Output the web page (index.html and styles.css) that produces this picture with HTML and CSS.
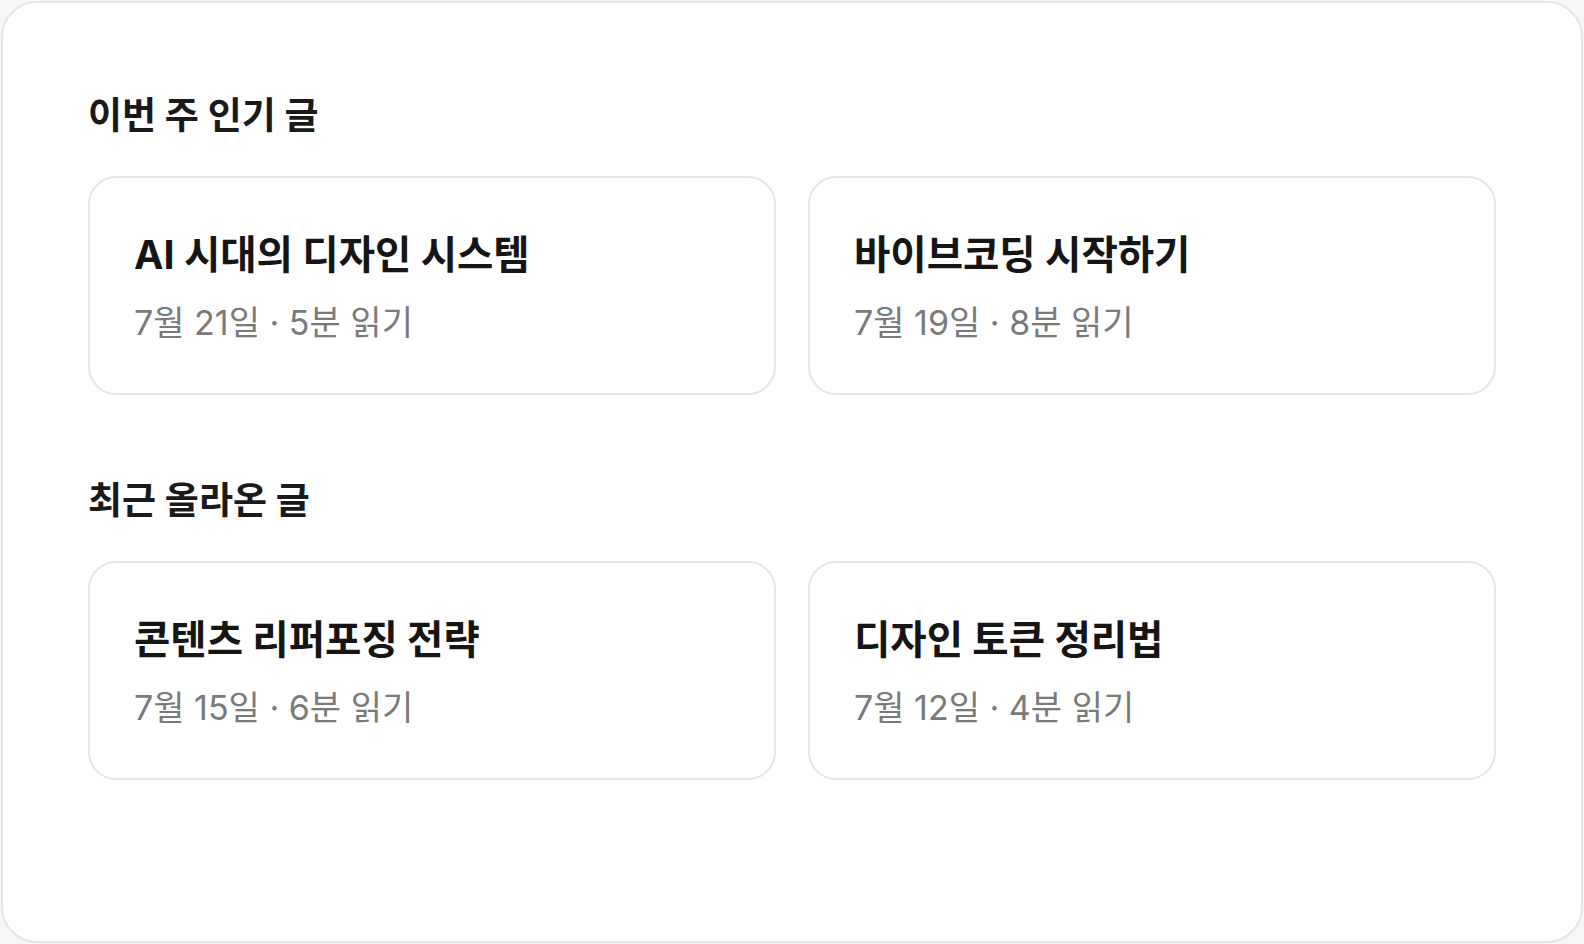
FILE: index.html
```html
<!DOCTYPE html>
<html lang="ko">
<head>
    <meta charset="UTF-8">
    <meta name="viewport" content="width=device-width, initial-scale=1.0">
    <title>글 목록</title>
    <link rel="stylesheet" href="styles.css">
</head>
<body>
    <main class="panel">
        <section class="section">
            <h2 class="section-title">이번 주 인기 글</h2>
            <div class="card-grid">
                <article class="card">
                    <h3 class="card-title">AI 시대의 디자인 시스템</h3>
                    <p class="card-meta">7월 21일 · 5분 읽기</p>
                </article>
                <article class="card">
                    <h3 class="card-title">바이브코딩 시작하기</h3>
                    <p class="card-meta">7월 19일 · 8분 읽기</p>
                </article>
            </div>
        </section>
        <section class="section">
            <h2 class="section-title">최근 올라온 글</h2>
            <div class="card-grid">
                <article class="card">
                    <h3 class="card-title">콘텐츠 리퍼포징 전략</h3>
                    <p class="card-meta">7월 15일 · 6분 읽기</p>
                </article>
                <article class="card">
                    <h3 class="card-title">디자인 토큰 정리법</h3>
                    <p class="card-meta">7월 12일 · 4분 읽기</p>
                </article>
            </div>
        </section>
    </main>
</body>
</html>
```

FILE: styles.css
```css
body{
    margin: 0;
    padding: 1px;
    background-color: #f7f7f7;
    font-family: Inter, "Noto Sans CJK KR", sans-serif;
    font-feature-settings: "palt" 1;
}
.panel{
    box-sizing: border-box;
    height: 942px;
    padding: 89px 85px 0 85px;
    background-color: #ffffff;
    border: 2px solid #e6e6e6;
    border-radius: 36px;
}
.section{
    margin-bottom: 82px;
}
.section-title{
    margin: 0 0 36px 0;
    font-size: 37px;
    line-height: 48px;
    font-weight: 700;
    color: #1a1a1a;
}
.card-grid{
    display: grid;
    grid-template-columns: 1fr 1fr;
    gap: 32px;
}
.card{
    padding: 51px 44px 48px 44px;
    border: 2px solid #e6e6e6;
    border-radius: 28px;
    background-color: #ffffff;
}
.card-title{
    margin: 0 0 20px 0;
    font-size: 39.5px;
    line-height: 52px;
    font-weight: 700;
    color: #151515;
}
.card-meta{
    margin: 0;
    font-size: 34px;
    line-height: 44px;
    color: #7a7a7a;
}
```
